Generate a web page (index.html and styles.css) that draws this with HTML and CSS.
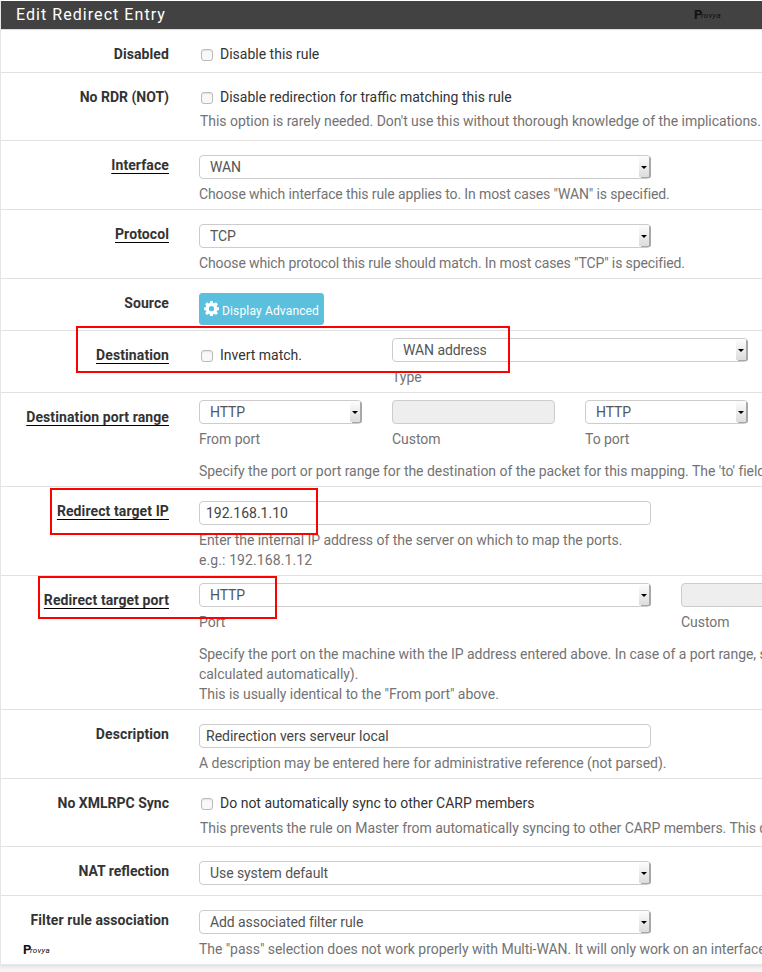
FILE: index.html
```html
<!DOCTYPE html>
<html lang="en">
<head>
<meta charset="utf-8">
<title>Edit Redirect Entry</title>
<link rel="stylesheet" href="styles.css">
</head>
<body>
<div class="panel">
  <div class="heading"><h2>Edit Redirect Entry</h2><span class="brand"><b>P</b><i>rovya</i></span></div>

  <div class="row h43">
    <div class="lab">Disabled</div>
    <div class="ctl pad"><label class="chk"><input type="checkbox">Disable this rule</label></div>
  </div>
  <div class="row h68">
    <div class="lab plain">No RDR (NOT)</div>
    <div class="ctl pad"><label class="chk"><input type="checkbox">Disable redirection for traffic matching this rule</label>
      <p class="help nudge tight">This option is rarely needed. Don't use this without thorough knowledge of the implications.</p></div>
  </div>
  <div class="row">
    <div class="lab"><u>Interface</u></div>
    <div class="ctl pad"><div class="sel wide"><select><option>WAN</option></select></div>
      <p class="help narrow">Choose which interface this rule applies to. In most cases "WAN" is specified.</p></div>
  </div>
  <div class="row">
    <div class="lab"><u>Protocol</u></div>
    <div class="ctl pad"><div class="sel wide"><select><option>TCP</option></select></div>
      <p class="help narrow">Choose which protocol this rule should match. In most cases "TCP" is specified.</p></div>
  </div>
  <div class="row">
    <div class="lab">Source</div>
    <div class="ctl pad"><button class="btn" type="button"><svg class="gear" viewBox="0 0 16 16"><path fill-rule="evenodd" d="M6.6 0h2.8l.4 2.2 1.1.5L12.8 1.4l2 2-1.3 1.9.5 1.1 2 .4v2.8l-2 .4-.5 1.1 1.3 1.9-2 2-1.9-1.3-1.1.5-.4 2H6.6l-.4-2-1.1-.5-1.9 1.3-2-2 1.3-1.9-.5-1.1L0 9.6V6.8l2-.4.5-1.1L1.2 3.4l2-2 1.9 1.3 1.1-.5zM8 5.4a2.8 2.8 0 1 0 0 5.6 2.8 2.8 0 0 0 0-5.6z"/></svg><span class="btn-text">Display Advanced</span></button></div>
  </div>
  <div class="row">
    <div class="lab"><u>Destination</u></div>
    <div class="ctl pad-s cols-dest">
      <label class="chk chk-s"><input type="checkbox">Invert match.</label>
      <div><div class="sel"><select><option>WAN address</option></select></div><p class="help">Type</p></div>
    </div>
  </div>
  <div class="row">
    <div class="lab"><u>Destination port range</u></div>
    <div class="ctl pad-s">
      <div class="cols3">
        <div><div class="sel"><select><option>HTTP</option></select></div><p class="help">From port</p></div>
        <div><input class="txt off" type="text" disabled><p class="help">Custom</p></div>
        <div><div class="sel"><select><option>HTTP</option></select></div><p class="help">To port</p></div>
      </div>
      <p class="help para">Specify the port or port range for the destination of the packet for this mapping. The 'to' field may be left empty if only mapping a single port.</p>
    </div>
  </div>
  <div class="row">
    <div class="lab"><u>Redirect target IP</u></div>
    <div class="ctl pad"><input class="txt wide" type="text" value="192.168.1.10">
      <p class="help">Enter the internal IP address of the server on which to map the ports.<br><span class="wider">e.g.: 192.168.1.12</span></p></div>
  </div>
  <div class="row">
    <div class="lab"><u>Redirect target port</u></div>
    <div class="ctl pad-s">
      <div class="cols2">
        <div><div class="sel wide"><select><option>HTTP</option></select></div><p class="help">Port</p></div>
        <div><input class="txt off" type="text" disabled><p class="help">Custom</p></div>
      </div>
      <p class="help para">Specify the port on the machine with the IP address entered above. In case of a port range, specify the beginning port of the range (the end port will be<br>calculated automatically).<br>This is usually identical to the "From port" above.</p>
    </div>
  </div>
  <div class="row">
    <div class="lab">Description</div>
    <div class="ctl pad"><input class="txt wide" type="text" value="Redirection vers serveur local">
      <p class="help">A description may be entered here for administrative reference (not parsed).</p></div>
  </div>
  <div class="row h68">
    <div class="lab plain">No XMLRPC Sync</div>
    <div class="ctl pad"><label class="chk"><input type="checkbox">Do not automatically sync to other CARP members</label>
      <p class="help nudge">This prevents the rule on Master from automatically syncing to other CARP members. This does not prevent the rule from being overwritten on Slave.</p></div>
  </div>
  <div class="row h49">
    <div class="lab plain">NAT reflection</div>
    <div class="ctl pad"><div class="sel wide"><select><option>Use system default</option></select></div></div>
  </div>
  <div class="row last">
    <div class="lab">Filter rule association</div>
    <div class="ctl pad"><div class="sel wide"><select><option>Add associated filter rule</option></select></div>
      <p class="help">The "pass" selection does not work properly with Multi-WAN. It will only work on an interface containing the default gateway.</p></div>
  </div>
  <span class="brand brand-low"><b>P</b><i>rovya</i></span>

  <div class="mark m1"></div>
  <div class="mark m2"></div>
  <div class="mark m3"></div>
</div>
</body>
</html>
```

FILE: styles.css
```css
html, body { margin: 0; padding: 0; height: 972px; overflow: hidden; background: #f5f5f5; }
body { font-family: Roboto, "Liberation Sans", sans-serif; font-size: 14px; line-height: 20px; color: #333; }

.panel { position: relative; width: 1100px; background: #fff; border: 1px solid #e6e6e6; border-right: 0; border-top-color: #fff; box-shadow: 0 1px 4px rgba(0,0,0,.12); }

.heading { height: 28px; background: #424242; display: flex; align-items: center; padding-left: 15px; position: relative; border-bottom: 1px solid #ddd; }
.heading h2 { margin: 0; font-size: 16px; font-weight: 400; letter-spacing: 1.05px; color: #fff; line-height: 28px; }

.brand { position: absolute; display: flex; align-items: flex-end; font-size: 8px; line-height: 8px; letter-spacing: .3px; color: #111; }
.brand b { font-size: 13px; line-height: 11px; font-weight: 700; letter-spacing: -1.5px; }
.brand i { font-style: italic; }
.heading .brand { left: 693px; top: 8px; }
.brand-low { left: 22px; bottom: 9px; }

.row { display: grid; grid-template-columns: 168px 1fr; column-gap: 30px; border-bottom: 1px solid #e2e2e2; box-sizing: border-box; }
.row.h43 { height: 43px; }
.row.h49 { height: 49px; }
.row.h68 { height: 68px; }
.row.last { border-bottom: 0; }

.lab { padding-top: 14px; text-align: right; font-weight: 700; font-size: 14px; letter-spacing: .1px; white-space: nowrap; }
.lab.plain { letter-spacing: 0; }
.lab u { text-decoration-color: #000; text-underline-offset: 3px; }

.ctl { padding-bottom: 5px; min-width: 0; }
.ctl.pad { padding-top: 14px; }
.ctl.pad-s { padding-top: 7px; }

.chk { display: flex; align-items: center; height: 20px; margin-left: 2px; white-space: nowrap; }
.chk input { appearance: none; width: 12px; height: 12px; margin: 1px 7px 0 0; border: 1px solid #bbb; border-radius: 3px; background: #f8f8f8; box-shadow: inset 0 1px 1px rgba(0,0,0,.08); }
.chk-s { margin-top: 7px; }

.help { margin: 5px 0 0; color: #737373; white-space: nowrap; line-height: 20px; letter-spacing: -.04px; }
.help.narrow { letter-spacing: -.12px; }
.help.nudge { margin-left: 1px; }
.help.tight { margin-top: 4px; }
.help.para { margin-top: 12px; }
.wider { letter-spacing: .1px; }

.sel { position: relative; height: 24px; width: 100%; }
.sel.wide { width: 452px; }
.sel select { appearance: none; display: block; width: 100%; height: 24px; box-sizing: border-box; padding: 0 11px 0 10px; border: 1px solid #ccc; border-radius: 4px; background: #fff; color: #555; font: 14px/20px Roboto, sans-serif; letter-spacing: -.08px; }
.sel::after { content: ""; position: absolute; right: 2px; top: 1px; width: 10px; height: 21px; background: linear-gradient(#fdfdfd, #dcdcdc); box-shadow: 2px 1px 0 #a8a8a8; border-radius: 0 2px 2px 0; pointer-events: none; }
.sel::before { content: ""; position: absolute; z-index: 1; right: 4px; top: 11px; border: 3px solid transparent; border-top: 3px solid #000; border-bottom: 0; }

.txt { display: block; height: 24px; box-sizing: border-box; padding: 0 6px; border: 1px solid #ccc; border-radius: 4px; background: #fff; color: #444; font: 14px/20px Roboto, sans-serif; }
.txt.wide { width: 452px; }
.txt.off { width: 100%; background: #eee; }

.btn { display: flex; align-items: center; width: 125px; height: 32px; padding: 0 0 0 4px; box-sizing: border-box; border: 1px solid #5bc0de; border-radius: 3px; background: #5bc0de; color: #fff; font: 12px/18px Roboto, sans-serif; letter-spacing: .15px; white-space: nowrap; }
.btn-text { padding-top: 4px; }
.gear { width: 15px; height: 15px; margin: -1px 3px 0 0; fill: #fff; flex: none; }

.cols-dest { display: grid; grid-template-columns: 163px 356px; column-gap: 30px; }
.cols3 { display: grid; grid-template-columns: 163px 163px 163px; column-gap: 30px; }
.cols2 { display: grid; grid-template-columns: 452px 163px; column-gap: 30px; }

.mark { position: absolute; border: 2px solid #f00; box-sizing: border-box; }
.m1 { left: 75px; top: 325px; width: 434px; height: 47px; }
.m2 { left: 49px; top: 487px; width: 268px; height: 47px; }
.m3 { left: 37px; top: 575px; width: 239px; height: 43px; }
```
